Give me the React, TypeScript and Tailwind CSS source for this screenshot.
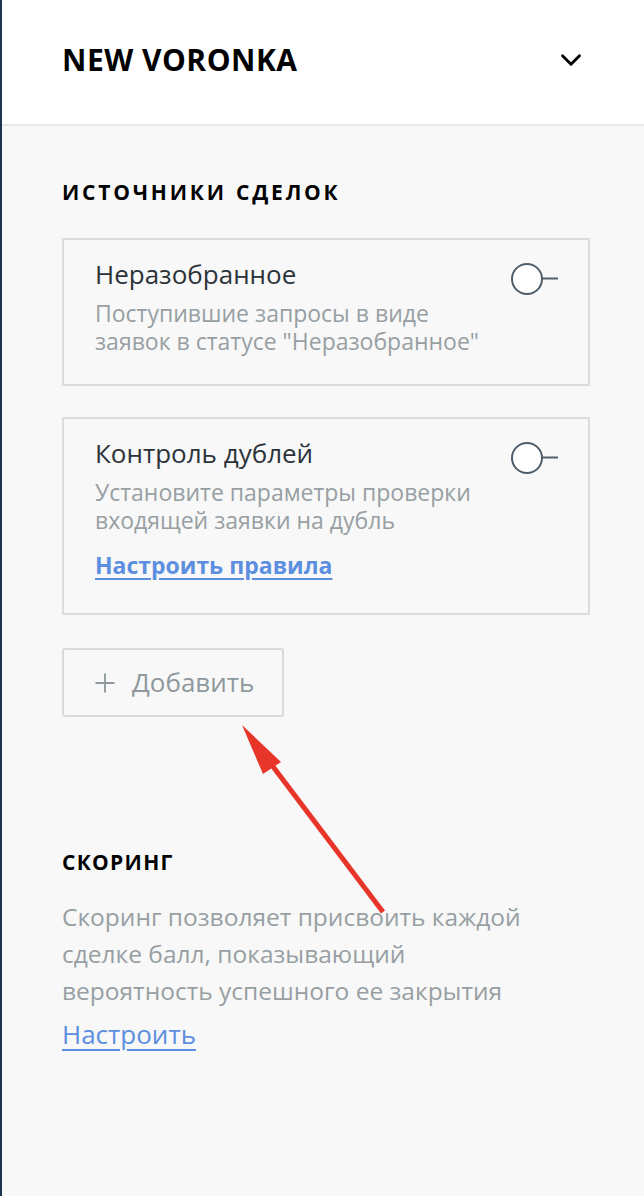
import { Fragment } from 'react'
import { ChevronDown, Plus } from 'lucide-react'

const sources = [
  {
    title: 'Неразобранное',
    text: ['Поступившие запросы в виде', 'заявок в статусе "Неразобранное"'],
    link: null as string | null,
  },
  {
    title: 'Контроль дублей',
    text: ['Установите параметры проверки', 'входящей заявки на дубль'],
    link: 'Настроить правила',
  },
]

function Toggle() {
  return (
    <svg width="50" height="34" viewBox="0 0 50 34" className="shrink-0">
      <circle cx="17" cy="17" r="15" fill="#ffffff" stroke="#4f5d6b" strokeWidth="2" />
      <line x1="32" y1="16.5" x2="48" y2="16.5" stroke="#4f5d6b" strokeWidth="2" />
    </svg>
  )
}

export default function App() {
  return (
    <div className="relative flex min-h-[1196px] w-full bg-[#f8f8f8] font-['Open_Sans',sans-serif]">
      <div className="w-[2px] shrink-0 bg-[#1e3550]" />
      <div className="flex flex-1 flex-col">
        <header className="flex h-[126px] items-center justify-between border-b-2 border-[#e8e8e8] bg-white pb-[5px] pl-[60px] pr-[56px]">
          <h1 className="text-[30px] font-bold leading-[30px] tracking-[0.5px] text-black">NEW VORONKA</h1>
          <ChevronDown className="h-[34px] w-[34px] text-black" strokeWidth={2} />
        </header>

        <div className="flex flex-col pl-[60px] pr-[54px]">
          <h2 className="mt-[52px] text-[21px] font-bold leading-[28px] tracking-[2.8px] text-black [word-spacing:1px]">
            ИСТОЧНИКИ СДЕЛОК
          </h2>

          <div className="mt-[32px] flex flex-col gap-[31px]">
            {sources.map((s) => (
              <div
                key={s.title}
                className="flex items-start justify-between border-2 border-[#dadddd] pb-[29px] pl-[31px] pr-[28px] pt-[17px]"
              >
                <div className="flex flex-col">
                  <div className="text-[26px] leading-[34px] text-[#2c333a]">{s.title}</div>
                  <p className="mt-[8px] text-[23px] leading-[28px] text-[#979fa3]">
                    {s.text.map((t, i) => (
                      <Fragment key={t}>
                        {i > 0 && <br />}
                        {t}
                      </Fragment>
                    ))}
                  </p>
                  {s.link && (
                    <a className="mb-[5px] mt-[17px] text-[23px] font-bold leading-[28px] text-[#5c8fe0] underline underline-offset-[4px]">
                      {s.link}
                    </a>
                  )}
                </div>
                <div className="mt-[5px]">
                  <Toggle />
                </div>
              </div>
            ))}
          </div>

          <button className="mt-[33px] flex h-[69px] w-[222px] items-center gap-[12px] rounded-[3px] border-2 border-[#d8dbdb] pl-[26px] text-[26px] text-[#8e989d]">
            <Plus className="h-[30px] w-[30px]" strokeWidth={1.5} />
            <span>Добавить</span>
          </button>

          <h2 className="mt-[131px] text-[21px] font-bold leading-[28px] tracking-[1.3px] text-black">СКОРИНГ</h2>
          <p className="mt-[22px] text-[24.5px] leading-[37px] text-[#979fa3]">
            Скоринг позволяет присвоить каждой
            <br />
            сделке балл, показывающий
            <br />
            вероятность успешного ее закрытия
          </p>
          <a className="mt-[7px] text-[26px] leading-[37px] text-[#5c8fe0] underline underline-offset-[5px]">
            Настроить
          </a>
        </div>
      </div>

      <svg className="pointer-events-none absolute left-0 top-0" width="644" height="1196">
        <line x1="383" y1="912" x2="268" y2="760" stroke="#e8352a" strokeWidth="5" />
        <polygon points="242,725 281,762 263,774" fill="#e8352a" />
      </svg>
    </div>
  )
}
